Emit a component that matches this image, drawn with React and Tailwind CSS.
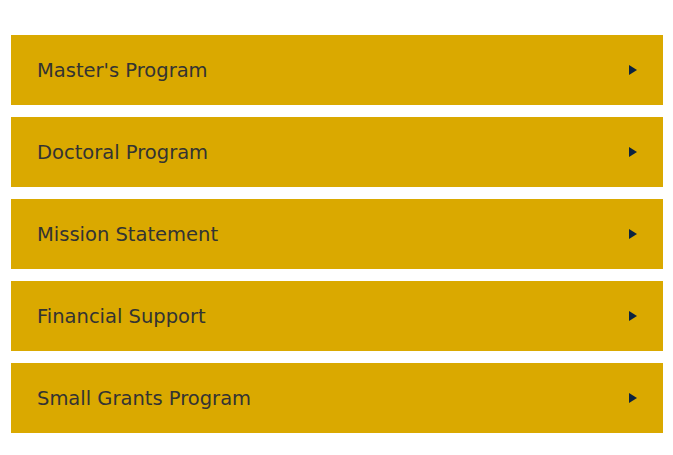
const sections = [
    "Master's Program",
    "Doctoral Program",
    "Mission Statement",
    "Financial Support",
    "Small Grants Program",
];

export default function App() {
    return (
        <div className="min-h-[455px] bg-white px-[11px] pt-[35px] pr-[10px]">
            <div className="flex flex-col gap-[12px]">
                {sections.map((title) => (
                    <button
                        key={title}
                        type="button"
                        className="flex h-[70px] w-full items-center justify-between bg-[#daa900] pl-[26px] pr-[26px] text-left"
                    >
                        <span className="pt-[1px] font-['DejaVu_Sans',sans-serif] text-[19.5px] text-[#333333]">
                            {title}
                        </span>
                        <svg width="8" height="10" viewBox="0 0 8 10" className="shrink-0">
                            <path d="M0 0 L8 5 L0 10 Z" fill="#0c2340" />
                        </svg>
                    </button>
                ))}
            </div>
        </div>
    );
}
